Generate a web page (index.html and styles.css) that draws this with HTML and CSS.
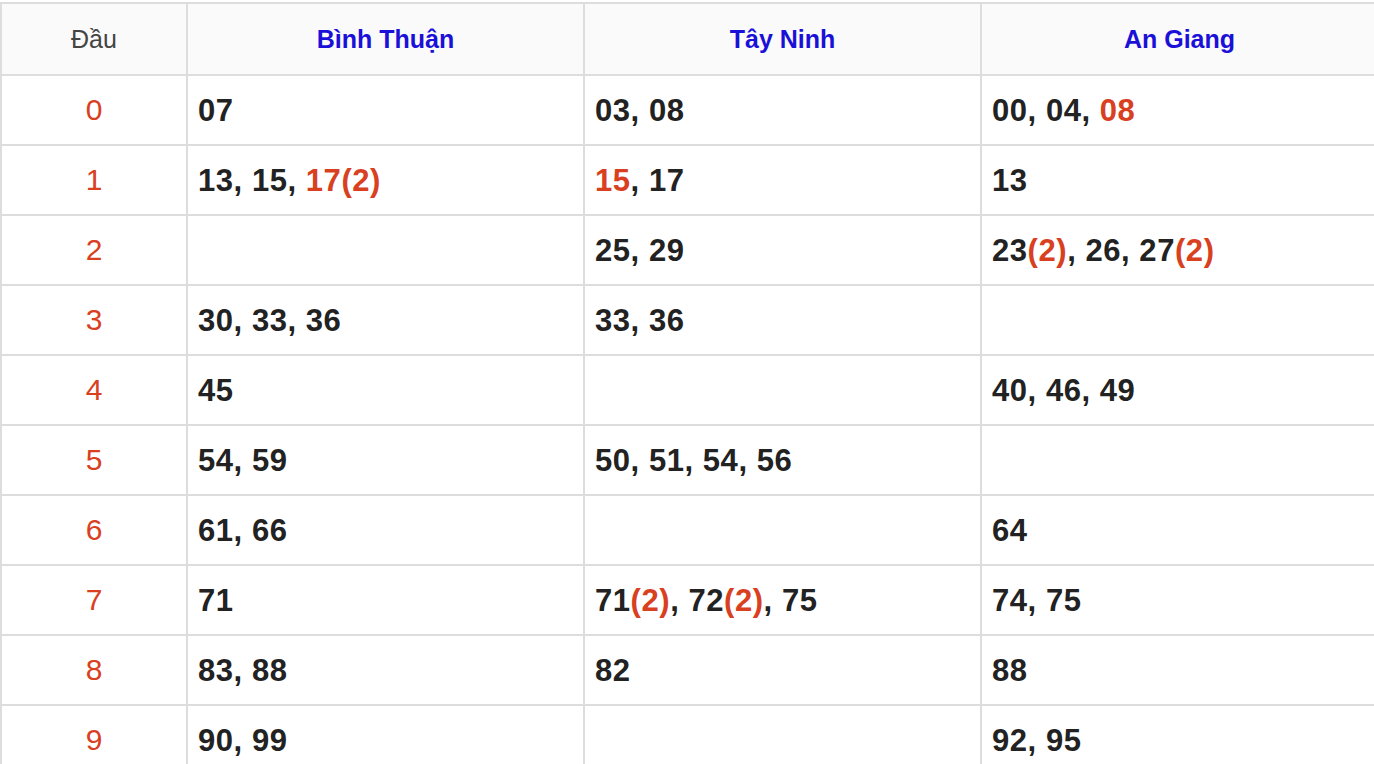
FILE: index.html
```html
<!DOCTYPE html>
<html lang="vi">
<head>
<meta charset="utf-8">
<title>Thống kê đầu</title>
<link rel="stylesheet" href="styles.css">
</head>
<body>
<table class="kq">
  <thead>
    <tr>
      <th class="c-dau">Đầu</th>
      <th class="c-prov">Bình Thuận</th>
      <th class="c-prov">Tây Ninh</th>
      <th class="c-prov">An Giang</th>
    </tr>
  </thead>
  <tbody>
    <tr><td class="idx">0</td><td class="nums">07</td><td class="nums">03, 08</td><td class="nums">00, 04, <span class="r">08</span></td></tr>
    <tr><td class="idx">1</td><td class="nums">13, 15, <span class="r">17(2)</span></td><td class="nums"><span class="r">15</span>, 17</td><td class="nums">13</td></tr>
    <tr><td class="idx">2</td><td class="nums"></td><td class="nums">25, 29</td><td class="nums">23<span class="r">(2)</span>, 26, 27<span class="r">(2)</span></td></tr>
    <tr><td class="idx">3</td><td class="nums">30, 33, 36</td><td class="nums">33, 36</td><td class="nums"></td></tr>
    <tr><td class="idx">4</td><td class="nums">45</td><td class="nums"></td><td class="nums">40, 46, 49</td></tr>
    <tr><td class="idx">5</td><td class="nums">54, 59</td><td class="nums">50, 51, 54, 56</td><td class="nums"></td></tr>
    <tr><td class="idx">6</td><td class="nums">61, 66</td><td class="nums"></td><td class="nums">64</td></tr>
    <tr><td class="idx">7</td><td class="nums">71</td><td class="nums">71<span class="r">(2)</span>, 72<span class="r">(2)</span>, 75</td><td class="nums">74, 75</td></tr>
    <tr><td class="idx">8</td><td class="nums">83, 88</td><td class="nums">82</td><td class="nums">88</td></tr>
    <tr><td class="idx">9</td><td class="nums">90, 99</td><td class="nums"></td><td class="nums">92, 95</td></tr>
  </tbody>
</table>
</body>
</html>
```

FILE: styles.css
```css
html, body {
  margin: 0;
  padding: 0;
  overflow: hidden;
  background: #ffffff;
  font-family: "Liberation Sans", Arial, sans-serif;
}

body {
  padding-top: 2px;
}

.kq {
  border-collapse: separate;
  border-spacing: 0;
  table-layout: fixed;
  width: 1379px;
  border-top: 2px solid #dddddd;
  border-left: 2px solid #dddddd;
}

.kq th,
.kq td {
  box-sizing: border-box;
  border-right: 2px solid #dddddd;
  border-bottom: 2px solid #dddddd;
  vertical-align: middle;
  padding: 0;
}

.kq th {
  height: 72px;
  background: #fafafa;
}

.kq td {
  height: 70px;
}

.c-dau {
  width: 186px;
  font-weight: normal;
  font-size: 25px;
  color: #444444;
  text-align: center;
}

.c-prov {
  width: 397px;
  font-weight: bold;
  font-size: 25px;
  color: #1a10d8;
  text-align: center;
  padding-left: 2px;
}

.idx {
  text-align: center;
  color: #d8401f;
  font-size: 30px;
  font-weight: normal;
  padding-top: 1px;
}

.nums {
  text-align: left;
  padding-left: 10px !important;
  padding-top: 2px !important;
  font-size: 31px;
  font-weight: bold;
  letter-spacing: 0.55px;
  color: #222222;
}

.r {
  color: #d8401f;
}
```
